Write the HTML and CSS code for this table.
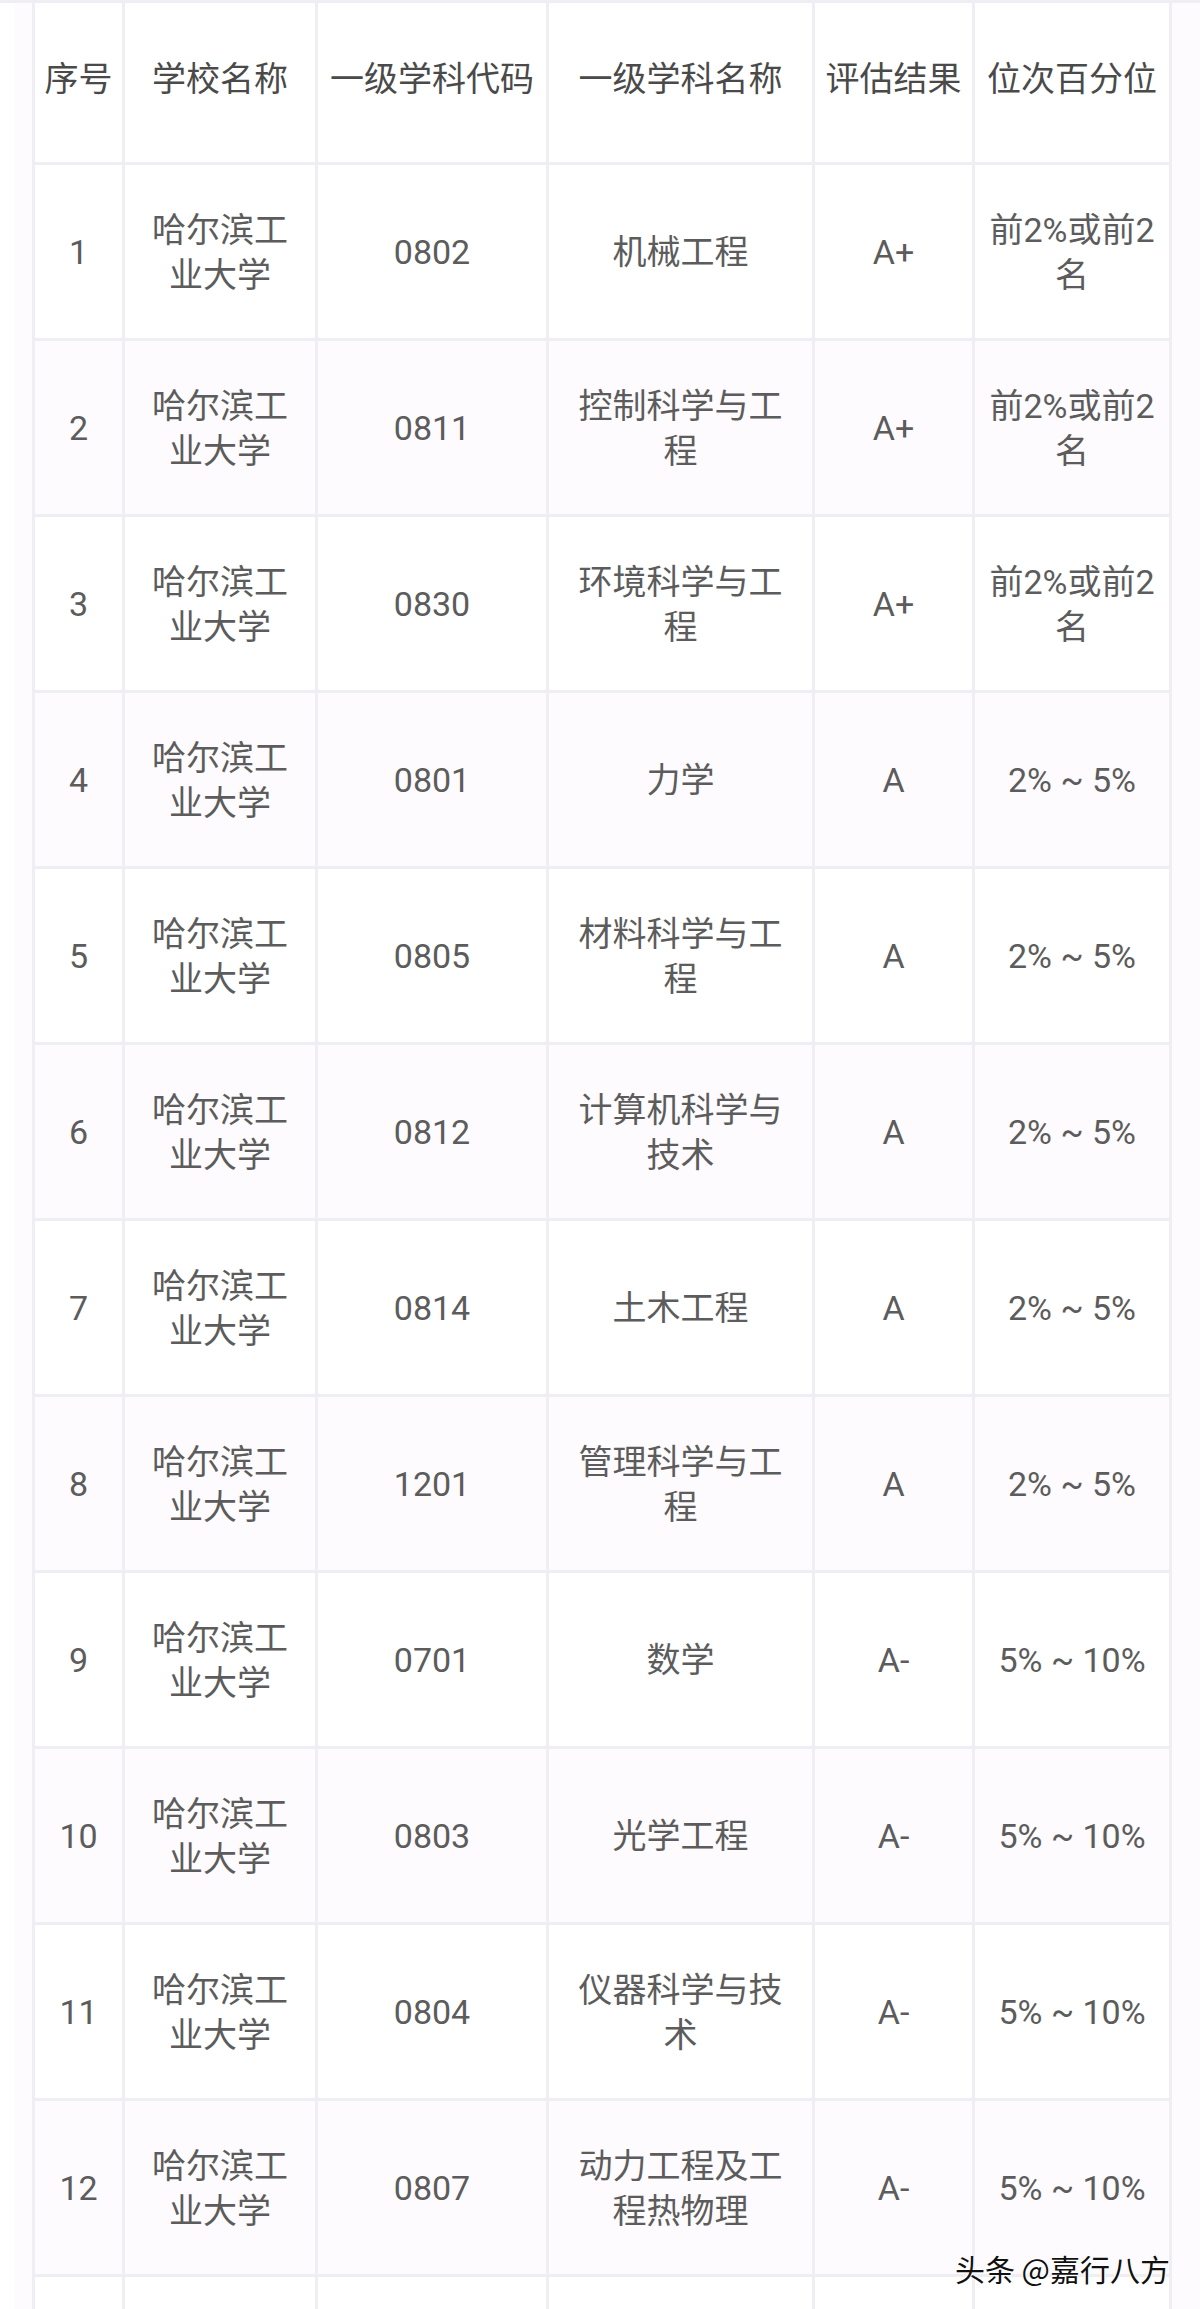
FILE: index.html
```html
<!DOCTYPE html>
<html lang="zh-CN">
<head>
<meta charset="utf-8">
<title>哈尔滨工业大学 学科评估</title>
<link rel="stylesheet" href="styles.css">
</head>
<body>
<div class="page">
  <div class="panel">
    <table class="grid">
      <thead>
        <tr>
          <th class="c1">序号</th>
          <th class="c2">学校名称</th>
          <th class="c3">一级学科代码</th>
          <th class="c4">一级学科名称</th>
          <th class="c5">评估结果</th>
          <th class="c6">位次百分位</th>
        </tr>
      </thead>
      <tbody>
        <tr><td>1</td><td>哈尔滨工业大学</td><td>0802</td><td class="subject">机械工程</td><td>A+</td><td>前2%或前2名</td></tr>
        <tr><td>2</td><td>哈尔滨工业大学</td><td>0811</td><td class="subject">控制科学与工程</td><td>A+</td><td>前2%或前2名</td></tr>
        <tr><td>3</td><td>哈尔滨工业大学</td><td>0830</td><td class="subject">环境科学与工程</td><td>A+</td><td>前2%或前2名</td></tr>
        <tr><td>4</td><td>哈尔滨工业大学</td><td>0801</td><td class="subject">力学</td><td>A</td><td>2% ~ 5%</td></tr>
        <tr><td>5</td><td>哈尔滨工业大学</td><td>0805</td><td class="subject">材料科学与工程</td><td>A</td><td>2% ~ 5%</td></tr>
        <tr><td>6</td><td>哈尔滨工业大学</td><td>0812</td><td class="subject">计算机科学与技术</td><td>A</td><td>2% ~ 5%</td></tr>
        <tr><td>7</td><td>哈尔滨工业大学</td><td>0814</td><td class="subject">土木工程</td><td>A</td><td>2% ~ 5%</td></tr>
        <tr><td>8</td><td>哈尔滨工业大学</td><td>1201</td><td class="subject">管理科学与工程</td><td>A</td><td>2% ~ 5%</td></tr>
        <tr><td>9</td><td>哈尔滨工业大学</td><td>0701</td><td class="subject">数学</td><td>A-</td><td>5% ~ 10%</td></tr>
        <tr><td>10</td><td>哈尔滨工业大学</td><td>0803</td><td class="subject">光学工程</td><td>A-</td><td>5% ~ 10%</td></tr>
        <tr><td>11</td><td>哈尔滨工业大学</td><td>0804</td><td class="subject">仪器科学与技术</td><td>A-</td><td>5% ~ 10%</td></tr>
        <tr><td>12</td><td>哈尔滨工业大学</td><td>0807</td><td class="subject">动力工程及工程热物理</td><td>A-</td><td>5% ~ 10%</td></tr>
        <tr><td></td><td></td><td></td><td class="subject"></td><td></td><td></td></tr>
      </tbody>
    </table>
  </div>
  <div class="watermark">头条 @嘉行八方</div>
</div>
</body>
</html>
```

FILE: styles.css
```css
html, body {
  margin: 0;
  padding: 0;
  background: #ffffff;
}

.page {
  position: relative;
  border-top: 3px solid #efeff3;
  padding-left: 15px;
  background: #ffffff;
  font-family: Roboto, "Noto Sans CJK SC", sans-serif;
}

.panel {
  background: #fdfbfd;
  padding-left: 17px;
}

.grid {
  width: 1140px;
  table-layout: fixed;
  border-collapse: separate;
  border-spacing: 0;
  border-left: 3px solid #efeff3;
  background: #ffffff;
}

.grid th,
.grid td {
  box-sizing: border-box;
  border-right: 3px solid #efeff3;
  border-bottom: 3px solid #efeff3;
  text-align: center;
  vertical-align: middle;
  font-size: 34px;
  line-height: 45px;
}

.grid th {
  height: 162px;
  font-weight: normal;
  color: #4a4a4a;
  padding: 0 0 6px;
  white-space: nowrap;
}

.grid td {
  height: 176px;
  color: #5c5c5c;
  padding: 2px 12px 0;
}

.grid td.subject {
  padding-left: 18px;
  padding-right: 18px;
}

.grid tbody tr:nth-child(even) td {
  background: #fdfbfd;
}

.c1 { width: 90px; }
.c2 { width: 193px; }
.c3 { width: 231px; }
.c4 { width: 266px; }
.c5 { width: 160px; }
.c6 { width: 197px; }

.watermark {
  position: absolute;
  top: 2245px;
  right: 30px;
  font-family: "Noto Sans CJK SC", sans-serif;
  font-size: 30px;
  line-height: 40px;
  color: #111111;
  text-shadow: -1px -1px 0 #ffffff, 1px 1px 1px #ffffff;
}
```
